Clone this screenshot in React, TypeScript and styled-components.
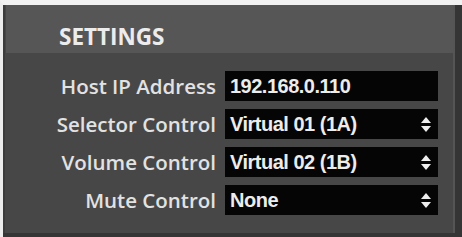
import styled, { createGlobalStyle } from "styled-components";

const GlobalStyle = createGlobalStyle`
  html, body {
    margin: 0;
    padding: 0;
    background: #f4f4f4;
  }
`;

const Screen = styled.div`
  width: 462px;
  height: 237px;
  box-sizing: border-box;
  border-top: 5px solid #f2f2f2;
  border-left: 3px solid #ededed;
  background: #353535;
  overflow: hidden;
`;

const Panel = styled.div`
  width: 452px;
  height: 228px;
  background: #474747;
  border-left: 2px solid #3c3c3c;
  border-right: 2px solid #555;
  box-sizing: border-box;
  display: flex;
  flex-direction: column;
`;

const Header = styled.div`
  height: 48px;
  box-sizing: border-box;
  margin-left: 1px;
  background: #565656;
  display: flex;
  align-items: flex-start;
  padding: 17px 0 0 53px;
  font-family: "Open Sans", "DejaVu Sans", sans-serif;
  font-weight: 700;
  font-size: 22.5px;
  line-height: 30px;
  color: #ececec;
`;

const Form = styled.div`
  display: grid;
  grid-template-columns: 211px 213px;
  column-gap: 9px;
  row-gap: 8px;
  padding-top: 18px;
  align-items: center;
`;

const Label = styled.div`
  font-family: "Open Sans", "DejaVu Sans", sans-serif;
  font-weight: 600;
  font-size: 20.5px;
  line-height: 30px;
  color: #e2e2e2;
  text-align: right;
  white-space: nowrap;
`;

const Field = styled.div`
  height: 30px;
  background: #050505;
  display: flex;
  align-items: center;
  justify-content: space-between;
  padding: 0 7px 0 5px;
  font-family: "Liberation Sans", Arial, sans-serif;
  font-weight: 700;
  font-size: 20px;
  letter-spacing: -0.5px;
  color: #ececec;
  box-sizing: border-box;
`;

function Arrows() {
  return (
    <svg width="10" height="15" viewBox="0 0 10 15">
      <path d="M5 0 L10 6 L0 6 Z" fill="#eee" />
      <path d="M0 9 L10 9 L5 15 Z" fill="#eee" />
    </svg>
  );
}

const rows: { label: string; value: string; select: boolean }[] = [
  { label: "Host IP Address", value: "192.168.0.110", select: false },
  { label: "Selector Control", value: "Virtual 01 (1A)", select: true },
  { label: "Volume Control", value: "Virtual 02 (1B)", select: true },
  { label: "Mute Control", value: "None", select: true },
];

export default function App() {
  return (
    <>
      <GlobalStyle />
      <Screen>
        <Panel>
          <Header>SETTINGS</Header>
          <Form>
            {rows.map((r) => [
              <Label key={r.label + "-l"}>{r.label}</Label>,
              <Field key={r.label + "-f"}>
                <span>{r.value}</span>
                {r.select && <Arrows />}
              </Field>,
            ])}
          </Form>
        </Panel>
      </Screen>
    </>
  );
}
